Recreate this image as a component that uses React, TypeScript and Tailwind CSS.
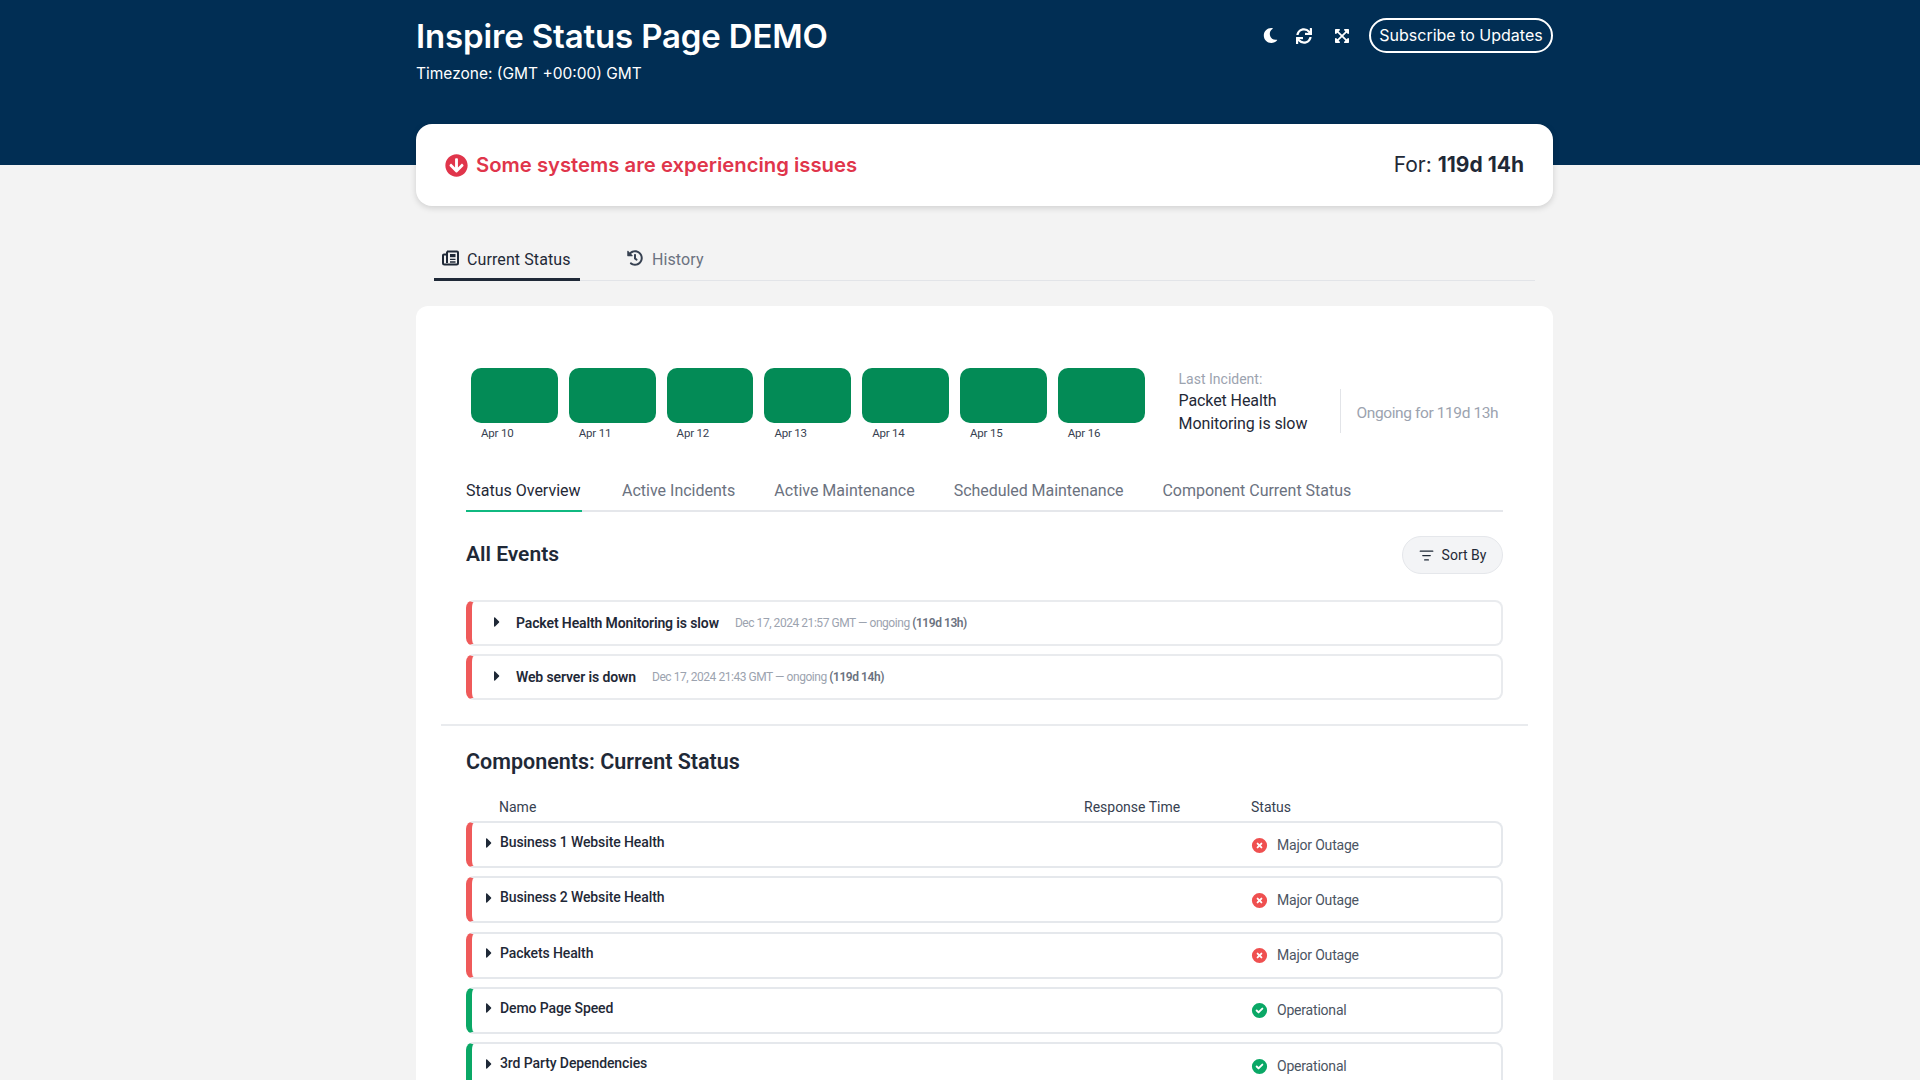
import React from "react";
import { FaMoon, FaSync, FaExpandArrowsAlt, FaHistory, FaArrowCircleDown, FaCaretRight } from "react-icons/fa";
import { HiXCircle, HiCheckCircle } from "react-icons/hi";
import { ListFilter } from "lucide-react";

const days = ["Apr 10", "Apr 11", "Apr 12", "Apr 13", "Apr 14", "Apr 15", "Apr 16"];
const comps = [
  ["Business 1 Website Health", "Major Outage"],
  ["Business 2 Website Health", "Major Outage"],
  ["Packets Health", "Major Outage"],
  ["Demo Page Speed", "Operational"],
  ["3rd Party Dependencies", "Operational"],
];
const events = [
  ["Packet Health Monitoring is slow", "Dec 17, 2024 21:57 GMT — ongoing", "(119d 13h)"],
  ["Web server is down", "Dec 17, 2024 21:43 GMT — ongoing", "(119d 14h)"],
];

function News() {
  return (
    <svg viewBox="0 0 17 16" className="mt-[1px] h-[16px] w-[17px]" fill="none" stroke="currentColor" strokeWidth="2">
      <path d="M5 1.5h10a1 1 0 0 1 1 1V13a1.5 1.5 0 0 1-1.5 1.5H2.5A1.5 1.5 0 0 1 1 13V5.5a1 1 0 0 1 1-1h3" />
      <path d="M5 1.5V13" />
      <rect x="8" y="4" width="5.5" height="3.2" fill="currentColor" stroke="none" />
      <path d="M8 9.4h5.5M8 12h5.5" strokeWidth="1.3" />
    </svg>
  );
}

export default function App() {
  return (
    <div className="h-screen overflow-hidden bg-[#f3f3f3] font-['Roboto',sans-serif] text-[#1f2937]">
      <header className="h-[165px] bg-[#012e54] pl-[416px] text-white">
        <div className="flex w-[1137px] items-start justify-between">
          <div className="pt-[15px]">
            <h1 className="font-['Inter',sans-serif] text-[33px] leading-[43px] font-semibold tracking-[-0.15px] whitespace-nowrap">Inspire Status Page DEMO</h1>
            <p className="mt-[4px] font-['Inter',sans-serif] text-[15.5px] leading-[24px]">Timezone: (GMT +00:00) GMT</p>
          </div>
          <div className="mt-[18px] flex items-center">
            <FaMoon className="ml-[2px] h-[15px] w-[15px]" />
            <FaSync className="ml-[18px] h-[16px] w-[16px]" />
            <FaExpandArrowsAlt className="ml-[22px] h-[16px] w-[16px]" />
            <button className="ml-[19px] h-[35px] w-[184px] rounded-full border-2 border-white pb-[2px] font-['Inter',sans-serif] text-[16px]">Subscribe to Updates</button>
          </div>
        </div>
      </header>

      <main className="ml-[416px] w-[1137px]">
        <section className="-mt-[41px] flex h-[82px] items-center justify-between rounded-2xl bg-white pr-[29px] pl-[29px] shadow-[0_2px_6px_rgba(0,0,0,0.15)]">
          <div className="flex items-center gap-[8px] font-['Inter',sans-serif] text-[20.3px] font-semibold text-[#e0354b]">
            <FaArrowCircleDown className="h-[23px] w-[23px]" />
            <span>Some systems are experiencing issues</span>
          </div>
          <div className="font-['Inter',sans-serif] text-[21px]">For: <b className="font-bold">119d 14h</b></div>
        </section>

        <nav className="mx-[18px] mt-[37px] flex h-[38px] items-start border-b border-[#e2e4e8] text-[16px]">
          <div className="flex h-[38px] w-[146px] items-start gap-[8px] border-b-[3px] border-[#1f2937] pt-[6px] pl-[8px]">
            <News />
            <span className="leading-[22px] tracking-[0.1px]">Current Status</span>
          </div>
          <div className="ml-[47px] flex items-start gap-[9px] pt-[6px] text-[#6b7280]">
            <FaHistory className="mt-[1px] h-[16px] w-[16px] text-[#374151]" />
            <span className="leading-[22px] tracking-[0.1px]">History</span>
          </div>
        </nav>

        <section className="mt-[25px] h-[900px] rounded-xl bg-white px-[50px] pt-[62px]">
          <div className="flex h-[72px] items-start">
            <div className="ml-[5px] flex gap-[11px]">
              {days.map((d) => (
                <div key={d} className="w-[86.8px]">
                  <div className="h-[55px] rounded-[10px] bg-[#038b56]" />
                  <div className="mt-[2px] pl-[10px] text-[11.5px] leading-[16px] tracking-[-0.2px] text-[#374151]">{d}</div>
                </div>
              ))}
            </div>
            <div className="ml-[34px] w-[158px] shrink-0 pt-[2px]">
              <div className="text-[14px] leading-[18px] text-[#9ca3af]">Last Incident:</div>
              <div className="mt-[2px] text-[16px] leading-[22.5px] tracking-[-0.1px]">Packet Health Monitoring is slow</div>
            </div>
            <div className="mt-[21px] ml-[3px] h-[44px] border-l border-[#e2e4e8] pl-[16px] text-[15.5px] leading-[48px] tracking-[-0.4px] whitespace-nowrap text-[#9ca3af]">Ongoing for 119d 13h</div>
          </div>

          <div className="mt-[35px] flex h-[37px] items-start border-b-2 border-[#e5e7eb] pt-[5px] text-[16px] text-[#6b7280]">
            <div className="-mb-[2px] -mt-[5px] h-[37px] w-[116px] border-b-2 border-[#10b981] pt-[5px] leading-[22px] whitespace-nowrap text-[#1f2937]">Status Overview</div>
            <div className="ml-[40px] leading-[22px]">Active Incidents</div>
            <div className="ml-[39px] leading-[22px]">Active Maintenance</div>
            <div className="ml-[39px] leading-[22px] tracking-[-0.05px]">Scheduled Maintenance</div>
            <div className="ml-[39px] leading-[22px] tracking-[-0.02px]">Component Current Status</div>
          </div>

          <div className="mt-[25px] flex h-[38px] items-start justify-between">
            <h2 className="pt-[2px] text-[21px] leading-[30px] font-semibold">All Events</h2>
            <button className="-mt-[1px] flex h-[38px] w-[101px] items-center justify-center gap-[8px] rounded-full border border-[#e5e7eb] bg-[#f3f4f6] text-[14px]">
              <ListFilter className="h-[15px] w-[15px]" />
              Sort By
            </button>
          </div>

          <div className="mt-[25px] flex flex-col gap-[8px]">
            {events.map(([t, d, p]) => (
              <div key={t} className="flex h-[46px] items-center rounded-lg border-y-2 border-r-2 border-l-[6px] border-[#e9ebee] border-l-[#ef5a5a] pl-[20px]">
                <FaCaretRight className="-mt-[2px] h-[16px] w-[10px]" />
                <span className="ml-[14px] text-[14px] font-semibold tracking-[-0.12px]">{t}</span>
                <span className="ml-[16px] text-[12px] tracking-[-0.45px] text-[#9ca3af]">{d} <b className="font-semibold text-[#6b7280]">{p}</b></span>
              </div>
            ))}
          </div>

          <div className="-mx-[25px] mt-[24px] border-t-2 border-[#e9ebee]" />

          <h2 className="mt-[21px] text-[21.5px] leading-[30px] font-semibold">Components: Current Status</h2>

          <div className="mt-[20px] grid h-[21px] grid-cols-[585px_167px_auto] pl-[33px] text-[14px] leading-[21px] text-[#374151]">
            <div>Name</div>
            <div>Response Time</div>
            <div>Status</div>
          </div>

          <div className="mt-[3px] flex flex-col gap-[8.3px]">
            {comps.map(([n, s]) => {
              const ok = s === "Operational";
              return (
                <div key={n} className={`grid h-[47px] grid-cols-[778px_auto] items-center rounded-lg border-y-2 border-r-2 border-l-[6px] border-[#e5e8ec] ${ok ? "border-l-[#0aa866]" : "border-l-[#ef5a5a]"}`}>
                  <div className="-mt-[4px] flex items-center pl-[12px]">
                    <FaCaretRight className="h-[16px] w-[10px]" />
                    <span className="ml-[6px] text-[14px] font-medium tracking-[-0.1px]">{n}</span>
                  </div>
                  <div className="mt-[1px] flex items-center gap-[8px] text-[14px] tracking-[-0.2px] text-[#4b5563]">
                    {ok ? <HiCheckCircle className="h-[19px] w-[19px] text-[#0aa866]" /> : <HiXCircle className="h-[19px] w-[19px] text-[#ef5050]" />}
                    {s}
                  </div>
                </div>
              );
            })}
          </div>
        </section>
      </main>
    </div>
  );
}
